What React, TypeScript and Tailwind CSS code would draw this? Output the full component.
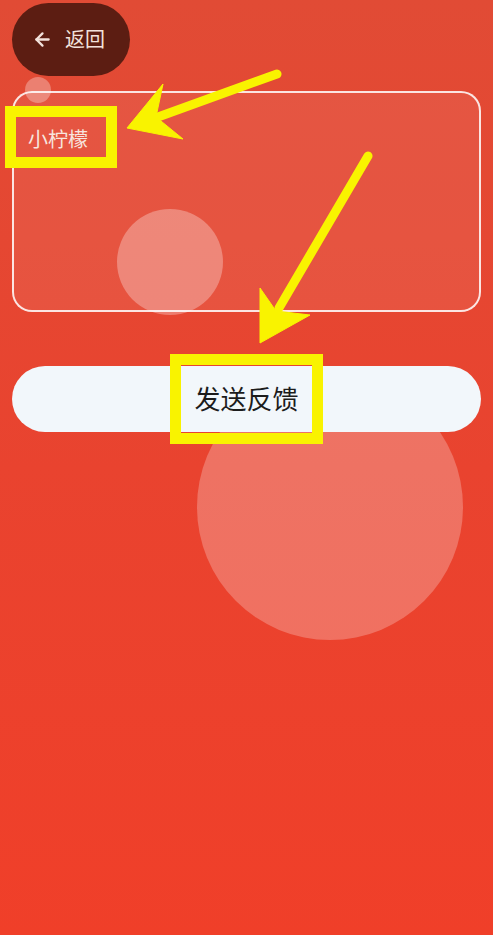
import React from "react";
import { ArrowLeft } from "lucide-react";

export default function App() {
  return (
    <div
      className="relative w-full min-h-[935px] h-[935px] overflow-hidden bg-gradient-to-b from-[#e14b35] via-[#e9432f] to-[#f03f29]"
      style={{ fontFamily: '"Noto Sans", "Noto Sans CJK SC", sans-serif' }}
    >
      {/* decorative circles */}
      <div className="absolute left-[25px] top-[77px] h-[26px] w-[26px] rounded-full bg-white/30" />
      <div className="absolute left-[117px] top-[209px] h-[106px] w-[106px] rounded-full bg-white/30" />
      <div className="absolute left-[197px] top-[374px] h-[266px] w-[266px] rounded-full bg-white/25" />

      <div className="relative flex flex-col px-3 pt-[3px]">
        <button className="flex h-[73px] w-[118px] items-center gap-[12px] rounded-full bg-[#5c1d12] pl-[20px] text-[20px] text-[#f3e2dc]">
          <ArrowLeft size={21} strokeWidth={2.6} />
          <span>返回</span>
        </button>

        <div className="mt-[15px] h-[221px] rounded-[20px] border-2 border-white/85 bg-white/[0.07] pl-[14px] pt-[33px]">
          <span className="text-[20px] leading-[28px] text-[#f7e5df]">小柠檬</span>
        </div>

        <button className="mt-[54px] flex h-[66px] items-center justify-center rounded-full bg-[#f2f7fb] text-[26px] text-[#1c1c1c]">
          发送反馈
        </button>
      </div>

      {/* yellow annotations */}
      <svg className="pointer-events-none absolute left-0 top-0" width="493" height="935" viewBox="0 0 493 935">
        <g fill="#f9f300" stroke="#f9f300">
          <rect x="10.5" y="111.5" width="101" height="51" fill="none" strokeWidth="11" />
          <rect x="175.5" y="359.5" width="142" height="79" fill="none" strokeWidth="11" />
          <line x1="277" y1="74" x2="158" y2="117" strokeWidth="9" strokeLinecap="round" />
          <polygon points="127,128 163,84 156,117 183,139" strokeWidth="1" strokeLinejoin="round" />
          <line x1="368" y1="156" x2="279" y2="308" strokeWidth="9" strokeLinecap="round" />
          <polygon points="260,343 260,288 276,311 310,315" strokeWidth="1" strokeLinejoin="round" />
        </g>
      </svg>
    </div>
  );
}
